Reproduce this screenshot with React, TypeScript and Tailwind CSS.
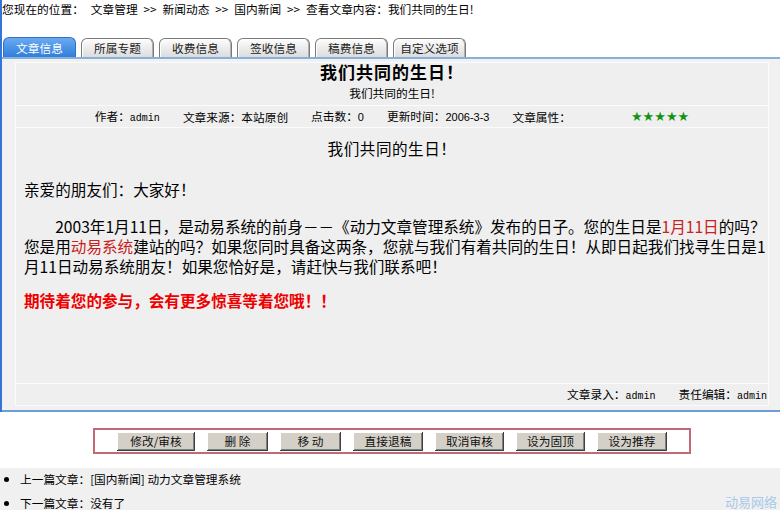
import React from "react";

const cjk = "font-['Noto_Sans_CJK_SC','Noto_Sans',sans-serif]";

const tabs = ["文章信息", "所属专题", "收费信息", "签收信息", "稿费信息", "自定义选项"];
const actions = [
  { label: "修改/审核", w: "w-[78px]" },
  { label: "删 除", w: "w-[61px]" },
  { label: "移 动", w: "w-[61px]" },
  { label: "直接退稿", w: "w-[70px]" },
  { label: "取消审核", w: "w-[69px]" },
  { label: "设为固顶", w: "w-[69px]" },
  { label: "设为推荐", w: "w-[70px]" },
];

function Mono({ children }: { children: React.ReactNode }) {
  return <span className="font-['Liberation_Mono',monospace] text-[10px]">{children}</span>;
}

function Num({ children }: { children: React.ReactNode }) {
  return <span className="font-['Liberation_Sans',sans-serif] text-[11px]">{children}</span>;
}

export default function App() {
  return (
    <div className={`relative w-[780px] h-[510px] overflow-hidden bg-white text-black text-[11.7px] ${cjk}`}>
      <div className="border-l-2 border-[#3276d8]">
        {/* breadcrumb */}
        <div className="h-[17px] flex items-center whitespace-nowrap leading-none">
          <span>您现在的位置：</span>
          <span className="ml-[7px]">文章管理</span>
          <span className="mx-[6px]">&gt;&gt;</span>
          <span>新闻动态</span>
          <span className="mx-[6px]">&gt;&gt;</span>
          <span>国内新闻</span>
          <span className="mx-[6px]">&gt;&gt;</span>
          <span>查看文章内容：我们共同的生日!</span>
        </div>

        {/* tabs */}
        <div className="mt-[20px] h-[20px] flex items-end gap-[5px] pl-[1px]">
          {tabs.map((t, i) =>
            i === 0 ? (
              <div
                key={t}
                className="w-[73px] h-[20px] rounded-t-[6px] bg-linear-to-b from-[#6aaaf0] to-[#2f7edc] border border-b-0 border-[#2f70c8] flex items-center justify-center text-white"
              >
                {t}
              </div>
            ) : (
              <div
                key={t}
                className="w-[73px] h-[19px] rounded-t-[6px] bg-linear-to-b from-[#fdfdfd] to-[#dcdcdc] border border-b-0 border-[#7a7a7a] shadow-[inset_1px_1px_0_#ffffff,inset_-1px_0_0_#b0b0b0] flex items-center justify-center text-[#222]"
              >
                {t}
              </div>
            )
          )}
        </div>

        {/* article panel */}
        <div className="border-t-2 border-t-[#86b1dc] border-b-2 border-b-[#6d9fd6] bg-[#f1f1f1] pl-[13px] pr-[11px] pt-[3px] pb-[4px]">
          <div className="bg-[#fbfbfb] p-px flex flex-col gap-px">
            {/* title */}
            <div className="h-[42px] bg-[#efefef] flex flex-col items-center">
              <div className="h-[18px] leading-[18px] text-[17px] font-bold tracking-[1px]">我们共同的生日！</div>
              <div className="mt-[3px] h-[18px] leading-[18px]">我们共同的生日!</div>
            </div>

            {/* meta */}
            <div className="h-[21px] bg-[#efefef] flex items-center justify-center gap-[23px] whitespace-nowrap leading-none">
              <span>
                作者：<Mono>admin</Mono>
              </span>
              <span>文章来源：本站原创</span>
              <span>
                点击数：<Num>0</Num>
              </span>
              <span>
                更新时间：<Num>2006-3-3</Num>
              </span>
              <span>文章属性：</span>
              <span className="ml-[37px] font-['DejaVu_Sans',sans-serif] text-[13px] text-[#129412] leading-none">
                ★★★★★
              </span>
            </div>

            {/* body */}
            <div className="h-[255px] bg-[#efefef] pl-[8px] pt-[8px] text-[15.6px] whitespace-nowrap">
              <div className="h-[24px] leading-[24px] text-center pr-[8px] tracking-[0.5px]">我们共同的生日！</div>
              <div className="mt-[19px] h-[20px] leading-[20px]">亲爱的朋友们：大家好！</div>
              <div className="mt-[17px] flex flex-col">
                <div className="h-[20px] leading-[20px] pl-[2em]">
                  2003年1月11日，是动易系统的前身－－《动力文章管理系统》发布的日子。您的生日是
                  <span className="text-[#c82020]">1月11日</span>的吗？
                </div>
                <div className="h-[20px] leading-[20px]">
                  您是用<span className="text-[#c82020]">动易系统</span>
                  建站的吗？如果您同时具备这两条，您就与我们有着共同的生日！从即日起我们找寻生日是1
                </div>
                <div className="h-[20px] leading-[20px]">月11日动易系统朋友！如果您恰好是，请赶快与我们联系吧！</div>
              </div>
              <div className="mt-[14px] h-[20px] leading-[20px] font-bold text-[#ee0000]">
                期待着您的参与，会有更多惊喜等着您哦！！
              </div>
            </div>

            {/* footer */}
            <div className="h-[21px] bg-[#efefef] flex items-center justify-end gap-[23px] pr-[1px] whitespace-nowrap leading-none">
              <span>
                文章录入：<Mono>admin</Mono>
              </span>
              <span>
                责任编辑：<Mono>admin</Mono>
              </span>
            </div>
          </div>
        </div>
      </div>

      {/* management actions */}
      <div className="mt-[16px] flex justify-center pl-[4px]">
        <div className="h-[26px] border-2 border-[#c06a76] px-[22px] flex items-center gap-[12px] bg-white">
          {actions.map((a) => (
            <button
              key={a.label}
              className={`${a.w} h-[19px] bg-[#d4d0c8] text-[11.7px] text-[#111] leading-none flex items-center justify-center shadow-[inset_-1px_-1px_0_#404040,inset_1px_1px_0_#ffffff,inset_-2px_-2px_0_#808080]`}
            >
              {a.label}
            </button>
          ))}
        </div>
      </div>

      {/* previous / next */}
      <div className="mt-[14px] bg-[#f0f0f0] h-[100px] flex flex-col gap-[2px]">
        <div className="h-[22px] flex items-center whitespace-nowrap">
          <span className="ml-[4px] w-[5px] h-[5px] rounded-full bg-black" />
          <span className="ml-[11px]">上一篇文章：[国内新闻] 动力文章管理系统</span>
        </div>
        <div className="h-[22px] flex items-center whitespace-nowrap">
          <span className="ml-[4px] w-[5px] h-[5px] rounded-full bg-black" />
          <span className="ml-[11px]">下一篇文章：没有了</span>
        </div>
      </div>

      <div className="absolute right-[3px] bottom-[0px] text-[13px] leading-[17px] text-[#a9c9e8]">动易网络</div>
    </div>
  );
}
